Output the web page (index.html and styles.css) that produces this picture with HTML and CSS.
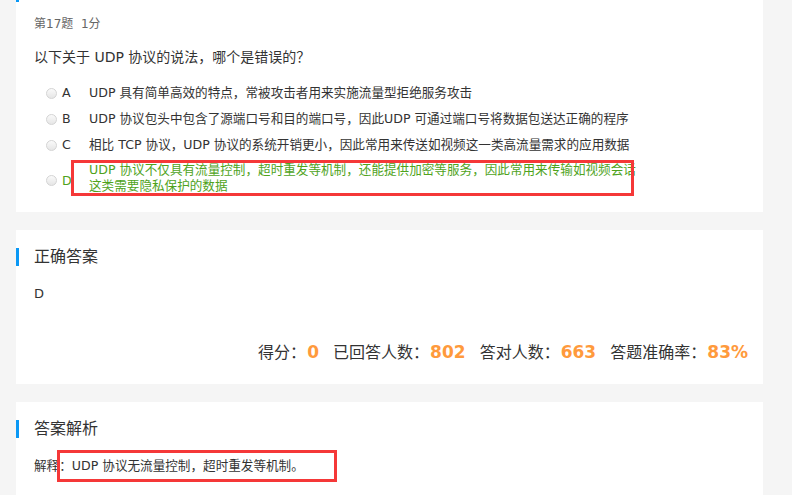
FILE: index.html
```html
<!DOCTYPE html>
<html>
  <head>
    <meta charset="utf-8">
    <title>第17题</title>
    <link rel="stylesheet" href="styles.css">
  </head>
  <body>
    <div class="page">
      <!-- Question card -->
      <div class="card question-card">
        <div class="top-mark"></div>
        <div class="question-meta">第17题&nbsp;&nbsp;1分</div>
        <div class="question-title">以下关于 UDP 协议的说法，哪个是错误的？</div>
        <ul class="options">
          <li class="option">
            <span class="radio"></span>
            <span class="letter">A</span>
            <span class="option-text">UDP 具有简单高效的特点，常被攻击者用来实施流量型拒绝服务攻击</span>
          </li>
          <li class="option">
            <span class="radio"></span>
            <span class="letter">B</span>
            <span class="option-text">UDP 协议包头中包含了源端口号和目的端口号，因此UDP 可通过端口号将数据包送达正确的程序</span>
          </li>
          <li class="option">
            <span class="radio"></span>
            <span class="letter">C</span>
            <span class="option-text">相比 TCP 协议，UDP 协议的系统开销更小，因此常用来传送如视频这一类高流量需求的应用数据</span>
          </li>
          <li class="option option-answer">
            <span class="radio"></span>
            <span class="letter">D</span>
            <span class="option-text">UDP 协议不仅具有流量控制，超时重发等机制，还能提供加密等服务，因此常用来传输如视频会话这类需要隐私保护的数据</span>
            <span class="mark-box mark-option"></span>
          </li>
        </ul>
      </div>

      <!-- Correct answer card -->
      <div class="card">
        <h3 class="section-title">正确答案</h3>
        <div class="answer">D</div>
        <div class="stats">
          <span class="stat-label">得分：</span><span class="stat-value">0</span>
          <span class="stat-label">已回答人数：</span><span class="stat-value">802</span>
          <span class="stat-label">答对人数：</span><span class="stat-value">663</span>
          <span class="stat-label">答题准确率：</span><span class="stat-value">83%</span>
        </div>
      </div>

      <!-- Explanation card -->
      <div class="card explain-card">
        <h3 class="section-title">答案解析</h3>
        <div class="explain">
          解释：UDP 协议无流量控制，超时重发等机制。
          <span class="mark-box mark-explain"></span>
        </div>
      </div>
    </div>
  </body>
</html>
```

FILE: styles.css
```css
:root {
  --page-bg: #f5f5f5;
  --text-color: #333;
  --accent-blue: #0a98f5;
  --answer-green: #4fa31c;
  --stat-orange: #ff9a3c;
  --mark-red: #f53838;
}

/* Basic resets */
* {
  margin: 0;
  padding: 0;
  box-sizing: border-box;
}

body {
  font-family: "DejaVu Sans", "Noto Sans CJK SC", sans-serif;
  background: var(--page-bg);
  color: var(--text-color);
  height: 100vh;
  overflow: hidden;
}

/* Main layout */
.page {
  display: flex;
  flex-direction: column;
  gap: 18px;
  padding-left: 16px;
  width: 763px;
}

.card {
  background: #fff;
  padding: 0 15px 0 18px;
}

/* Question card */
.top-mark {
  width: 3px;
  height: 2px;
  margin-left: -18px;
  background: var(--accent-blue);
}

.question-card {
  padding-bottom: 14px;
}

.question-meta {
  margin-top: 12px;
  font-size: 12px;
  line-height: 20px;
  color: #666;
}

.question-title {
  margin-top: 12px;
  font-size: 14px;
  line-height: 22px;
}

.options {
  list-style: none;
  margin-top: 12px;
}

.option {
  display: flex;
  align-items: center;
  font-size: 12.6px;
  line-height: 26px;
  position: relative;
}

.radio {
  width: 11px;
  height: 11px;
  margin-left: 12px;
  margin-right: 5px;
  border: 1px solid #d4d4d4;
  border-radius: 50%;
  background: linear-gradient(#fafafa, #e6e6e6);
  flex-shrink: 0;
}

.letter {
  width: 27px;
  flex-shrink: 0;
}

.option-text {
  flex: 1;
}

.option-answer {
  color: var(--answer-green);
  line-height: 16px;
  padding: 4px 0;
}

.option-answer .option-text {
  flex: none;
  width: 553px;
}

.option-answer .radio {
  margin-top: 4px;
}

.option-answer .letter {
  margin-top: 6px;
}

/* Red annotation frames */
.mark-box {
  position: absolute;
  border: 3px solid var(--mark-red);
  pointer-events: none;
}

.mark-option {
  left: 37px;
  top: 2px;
  width: 563px;
  height: 36px;
}

/* Section titles */
.section-title {
  margin: 18px 0 0 -18px;
  padding-left: 15px;
  border-left: 3px solid var(--accent-blue);
  font-size: 16px;
  font-weight: normal;
  line-height: 18px;
}

.answer {
  margin-top: 18px;
  font-size: 13px;
  line-height: 20px;
}

.stats {
  margin-top: 36px;
  padding-bottom: 19px;
  text-align: right;
  font-size: 16px;
  line-height: 24px;
  white-space: nowrap;
}

.stat-label {
  margin-left: 9px;
}

.stat-value {
  margin-left: 1px;
  font-weight: bold;
  font-size: 17px;
  color: var(--stat-orange);
}

/* Explanation */
.explain-card {
  padding-bottom: 40px;
}

.explain {
  position: relative;
  margin-top: 18px;
  font-size: 12.6px;
  line-height: 20px;
}

.mark-explain {
  left: 23px;
  top: -6px;
  width: 280px;
  height: 32px;
}
```
